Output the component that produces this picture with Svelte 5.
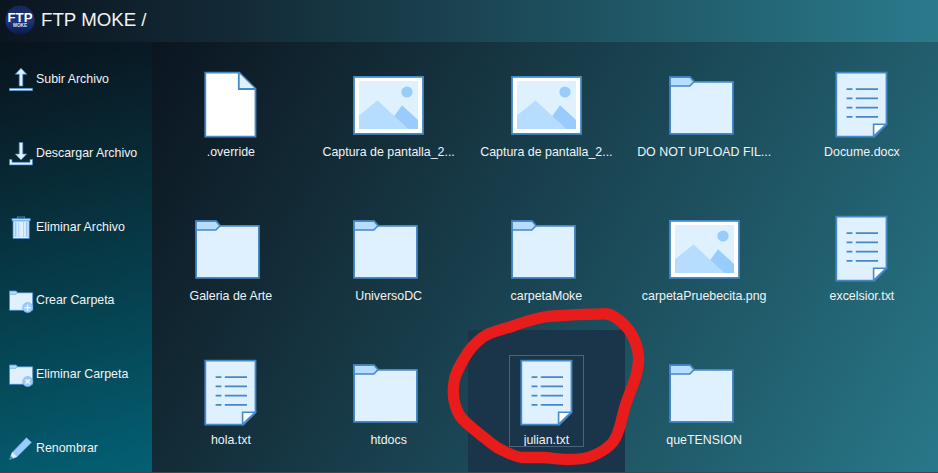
<script>
  const actions = [
    { label: 'Subir Archivo', icon: 'upload' },
    { label: 'Descargar Archivo', icon: 'download' },
    { label: 'Eliminar Archivo', icon: 'trash' },
    { label: 'Crear Carpeta', icon: 'add' },
    { label: 'Eliminar Carpeta', icon: 'remove' },
    { label: 'Renombrar', icon: 'pencil' },
  ];

  const files = [
    { name: '.override', type: 'blank' },
    { name: 'Captura de pantalla_2...', type: 'image' },
    { name: 'Captura de pantalla_2...', type: 'image' },
    { name: 'DO NOT UPLOAD FIL...', type: 'folder' },
    { name: 'Docume.docx', type: 'text' },
    { name: 'Galeria de Arte', type: 'folder' },
    { name: 'UniversoDC', type: 'folder' },
    { name: 'carpetaMoke', type: 'folder' },
    { name: 'carpetaPruebecita.png', type: 'image' },
    { name: 'excelsior.txt', type: 'text' },
    { name: 'hola.txt', type: 'text' },
    { name: 'htdocs', type: 'folder' },
    { name: 'julian.txt', type: 'text', selected: true },
    { name: 'queTENSION', type: 'folder' },
  ];
</script>

<div class="app">
  <header>
    <svg class="logo" viewBox="0 0 30 30" width="30" height="30">
      <defs>
        <linearGradient id="badge" x1="0" y1="0" x2="0" y2="1">
          <stop offset="0" stop-color="#17265a" />
          <stop offset="0.55" stop-color="#1c3478" />
          <stop offset="1" stop-color="#0c1a4a" />
        </linearGradient>
      </defs>
      <circle cx="15" cy="15" r="14.6" fill="url(#badge)" />
      <text x="15" y="17" class="logo-big" text-anchor="middle" textLength="25" lengthAdjust="spacingAndGlyphs">FTP</text>
      <text x="15" y="22" class="logo-small" text-anchor="middle" textLength="14" lengthAdjust="spacingAndGlyphs">MOKE</text>
    </svg>
    <h1>FTP MOKE /</h1>
  </header>

  <div class="body">
    <nav>
      {#each actions as action}
        <div class="action">
          <svg viewBox="0 0 26 26" width="26" height="26">
            {#if action.icon === 'upload'}
              <path d="M13 1.2 18.7 7.2H14.8V19H11.2V7.2H7.3Z" fill="#dff0fe" stroke="#4788c7" stroke-width=".7" />
              <rect x="1.5" y="21.3" width="23" height="2.4" fill="#dff0fe" stroke="#4788c7" stroke-width=".7" />
            {:else if action.icon === 'download'}
              <path d="M11.2 1.5H14.8V13H18.7L13 19 7.3 13H11.2Z" fill="#dff0fe" stroke="#4788c7" stroke-width=".7" />
              <path d="M1.5 18.5H4V21.3H22V18.5H24.5V23.9H1.5Z" fill="#dff0fe" stroke="#4788c7" stroke-width=".7" />
            {:else if action.icon === 'trash'}
              <g transform="translate(0 1)">
                <path d="M9.5 3.5V2H16.5V3.5" fill="none" stroke="#4788c7" stroke-width="1.2" />
                <path d="M5 4.5H21.2V23.5H5Z" fill="#dff0fe" stroke="#4788c7" stroke-width=".8" />
                <path d="M7.6 7V22M18.7 7V22" stroke="#98ccfd" stroke-width="1.8" />
                <path d="M10.7 7V22M15.6 7V22" stroke="#98ccfd" stroke-width=".8" />
                <rect x="4" y="3.5" width="18.2" height="2.4" fill="#b6dcfe" stroke="#4788c7" stroke-width=".7" />
              </g>
            {:else if action.icon === 'pencil'}
              <path d="M1.6 24.6 4 17.5 18.5 2.6 23.7 7.4 9 21.9Z" fill="#98ccfd" stroke="#4788c7" stroke-width=".7" />
              <path d="M4.2 17.3 9.1 21.8 4.8 23.5 2.6 21.5Z" fill="#dff0fe" />
              <path d="M1.4 24.8 2.8 20.8 5.5 23.4Z" fill="#4788c7" />
            {:else}
              <g transform="translate(0 1)">
                <path d="M1.5 1.9H8.2L9.6 3.8H24.7V21.3H1.5Z" fill="#dff0fe" stroke="#4788c7" stroke-width=".7" />
                <path d="M1.6 2.2H8L9.2 4 8 5.3H1.6Z" fill="#b6dcfe" stroke="#4788c7" stroke-width=".5" />
                <circle cx="19.7" cy="18.6" r="5.1" fill="#98ccfd" stroke="#72abe3" stroke-width=".5" />
                {#if action.icon === 'add'}
                  <path d="M19.7 15.4V21.800M16.5 18.6H22.9" stroke="#fff" stroke-width="1.2" />
                {:else}
                  <path d="M17.6 16.5 21.8 20.7M21.8 16.5 17.6 20.7" stroke="#fff" stroke-width="1.2" />
                {/if}
              </g>
            {/if}
          </svg>
          <span>{action.label}</span>
        </div>
      {/each}
    </nav>

    <main>
      {#each files as file}
        <div class="cell" class:selected={file.selected}>
          <div class="file">
            <svg viewBox="0 0 75 75" width="75" height="75">
              {#if file.type === 'blank'}
                <path d="M12.3 5.6H46.3L62.5 21.8V69.7H12.3Z" fill="#fff" stroke="#4788c7" stroke-width="1.8" />
                <path d="M45.8 6.1V22H62" fill="#dff0fe" stroke="#4788c7" stroke-width="1.8" />
              {:else if file.type === 'image'}
                <rect x="3" y="9.9" width="69" height="57" fill="#fff" stroke="#4788c7" stroke-width="1.8" />
                <rect x="8" y="14" width="59" height="48" fill="#dff0fe" />
                <circle cx="56" cy="25" r="5.6" fill="#98ccfd" />
                <path d="M34 62 51 38.3 67 53V62Z" fill="#98ccfd" />
                <path d="M8 62V48.5L26.5 33.4 57.5 62Z" fill="#b6dcfe" />
              {:else if file.type === 'folder'}
                <path d="M3.1 10.4H23L27 14.8H65.9V66.9H3.1Z" fill="#dff0fe" stroke="#4788c7" stroke-width="1.8" />
                <path d="M3.1 10.1H23L27 14.8 22.8 19H3.1Z" fill="#b6dcfe" stroke="#4788c7" stroke-width="1.6" />
              {:else}
                <path d="M12.3 5.6H62.5V57.5L50.3 69.7H12.3Z" fill="#dff0fe" stroke="#4788c7" stroke-width="1.8" />
                <path d="M62 57.2H49.6V69.2Z" fill="#fff" stroke="#4788c7" stroke-width="1.6" />
                <path d="M22.6 22.2H28.4M31.8 22.2H54M22.6 31.4H28.4M31.8 31.4H54M22.6 40.6H28.4M31.8 40.6H54M22.6 49.8H28.4M31.8 49.8H54" stroke="#4788c7" stroke-width="1.8" />
              {/if}
            </svg>
            <span>{file.name}</span>
          </div>
        </div>
      {/each}
    </main>
  </div>

  <svg class="marker" viewBox="0 0 938 473" width="938" height="473">
    <path
      d="M600 314C583 314 566 315 547 316.500C532 319 524 322 513 326C500 330 490 332 483 337C475 343 470 348 465 357C459 367 455 374 454 382C452 394 454 406 460 416C466 424 474 429 482 436C490 442 494 446 500 449C508 453 515 457 522 457.500H543C552 458 558 459.500 567 459.500C576 459.500 584 459 591 456.500C600 453 608 448 613 442C620 433 621 419 625 406.500C628 396 633 386 636 376C637 370 639 366 638.500 357C638 347 636 342 632 335C628 327 621 321 614 316.500C609 313 605 313.600 600 314Z"
      fill="none" stroke="#e81c1b" stroke-width="11.3" stroke-linejoin="round" />
  </svg>
</div>

<style>
  :global(body) { margin: 0; overflow: hidden; }
  .app {
    position: relative;
    display: flex;
    flex-direction: column;
    width: 938px;
    height: 473px;
    box-sizing: border-box;
    overflow: hidden;
    border-bottom: 1px solid #41464c;
    font-family: 'Liberation Sans', Arial, sans-serif;
    color: #f1f3f4;
  }
  header {
    display: flex;
    align-items: center;
    flex: none;
    height: 42px;
    padding: 0 0 2px 5px;
    box-sizing: border-box;
    gap: 6px;
    background: linear-gradient(90deg, #0b1520 0%, #132a36 25%, #1b4452 50%, #22606f 75%, #2a7a8c 100%);
  }
  h1 { margin: 0; font-size: 18.7px; font-weight: 400; line-height: 24px; white-space: nowrap; }
  .logo-big { font: bold 12px 'Liberation Sans', Arial, sans-serif; fill: #fff; }
  .logo-small { font: bold 4.6px 'Liberation Sans', Arial, sans-serif; fill: #dfe4f2; }
  .body { display: flex; flex: 1; min-height: 0; }
  nav {
    flex: none;
    width: 152px;
    overflow: hidden;
    padding-top: 1px;
    box-sizing: border-box;
    background: linear-gradient(165deg, #08131d 0%, #082934 30%, #06404e 60%, #036074 100%);
  }
  .action {
    display: flex;
    align-items: center;
    gap: 2px;
    height: 73.7px;
    padding-left: 8px;
    font-size: 12.4px;
    white-space: nowrap;
  }
  .action svg { flex: none; }
  .action span { padding-bottom: 1px; }
  main {
    flex: 1;
    min-width: 0;
    display: grid;
    grid-template-columns: repeat(5, 157.77px);
    grid-auto-rows: 144.2px;
    overflow: hidden;
    background: linear-gradient(120deg, #0b1520 0%, #132c37 25%, #1a4452 50%, #215d6c 75%, #28788a 100%);
  }
  .cell { display: flex; justify-content: center; padding-top: 25px; box-sizing: border-box; }
  .file { display: flex; flex-direction: column; align-items: center; }
  .file svg { flex: none; }
  .file span { font-size: 12.4px; line-height: 18px; margin-top: 1px; white-space: nowrap; }
  .selected { background: #1a3449; }
  .selected .file { height: 92px; width: 75px; outline: 1px solid #4b647c; outline-offset: -1px; }
  .marker { position: absolute; left: 0; top: 0; pointer-events: none; }
</style>
